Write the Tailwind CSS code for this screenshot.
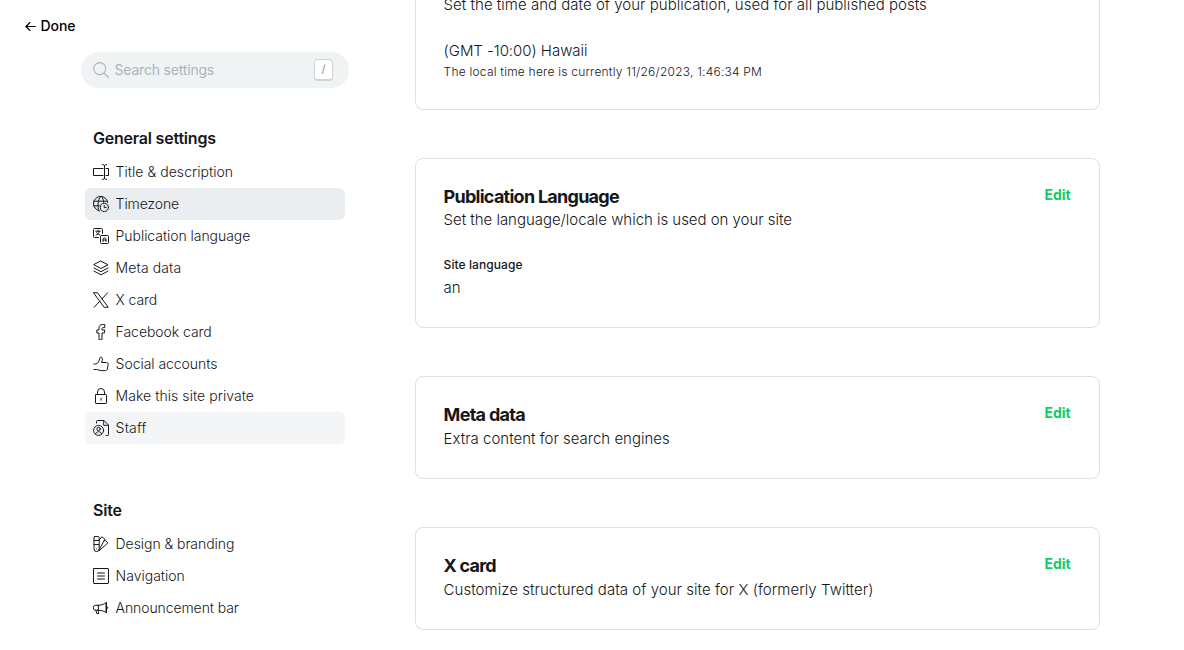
<!DOCTYPE html>
<html lang="en">
<head>
<meta charset="utf-8">
<title>Settings</title>
<script src="https://cdn.jsdelivr.net/npm/@tailwindcss/browser@4"></script>
</head>
<body class="h-[650px] overflow-hidden bg-white font-['Inter',sans-serif] text-[#15171a]">
<div class="flex h-[650px] overflow-hidden">
  <aside class="w-[415px] shrink-0">
    <a class="ml-[25px] mt-[16px] flex h-5 items-center gap-[4.6px] text-sm font-medium tracking-[-0.1px] text-black">
      <svg class="size-[11px]" viewBox="0 0 11 11" fill="none" stroke="currentColor" stroke-width="1.1" stroke-linecap="round" stroke-linejoin="round"><path d="M.7 5.500h9.600M5 1.500l-4.200 4 4.200 4"/></svg>
      <span>Done</span>
    </a>
    <div class="ml-[81px] mt-[16px] flex h-9 w-[268px] items-center rounded-full bg-[#eff3f4] pl-3 pr-4 text-[#abb4be]">
      <svg class="size-4" viewBox="0 0 16 16" fill="none" stroke="currentColor" stroke-width="1.1" stroke-linecap="round"><circle cx="6.700" cy="6.600" r="6"/><path d="M11 11l4.500 4.500"/></svg>
      <span class="ml-[5.5px] flex-1 text-sm tracking-[-0.19px]">Search settings</span>
      <kbd class="flex h-[22px] w-[19px] items-center justify-center rounded border border-b-2 border-[#ced4d9] bg-white font-['Inter'] text-[11px] text-[#7c8b9a]">/</kbd>
    </div>
    <nav class="ml-[85px] mt-10 w-[260px] text-sm font-light">
      <h2 class="mb-[6px] h-[22px] pl-2 text-base font-semibold leading-5 tracking-[-0.21px]">General settings</h2>
      <ul>
        <li class="flex h-8 items-center gap-[6.6px] rounded-md px-2"><svg class="size-4" viewBox="0 0 16 16" fill="none" stroke="currentColor" stroke-linecap="round" stroke-linejoin="round"><path d="M10 4.500H.5v7H10M13 4.500h2.500v7H13M11.500 1.500v13M9.300.6c1.200 0 2.200.5 2.200 1.500 0-1 1-1.500 2.200-1.500M9.300 15.400c1.200 0 2.200-.5 2.200-1.500 0 1 1 1.500 2.200 1.500"/></svg><span class="tracking-[0.04px]">Title &amp; description</span></li>
        <li class="flex h-8 items-center gap-[6.6px] rounded-md bg-[#ebeef0] px-2"><svg class="size-4" viewBox="0 0 16 16" fill="none" stroke="currentColor" stroke-linecap="round" stroke-linejoin="round"><path d="M6.200 14.700A7.200 7.200 0 1 1 14.800 6.500M.8 5.200h13.100M.5 9.800h5.800M6 15C4.400 11 4.400 4.500 7.500.5M8.500.5c1.300 1.700 2.100 3.600 2.200 5.700"/><circle cx="11.400" cy="11.400" r="4.100"/><path d="M11.200 9.400v2.200h2"/></svg><span class="tracking-[-0.1px]">Timezone</span></li>
        <li class="flex h-8 items-center gap-[6.6px] rounded-md px-2"><svg class="size-4" viewBox="0 0 16 16" fill="none" stroke="currentColor" stroke-linecap="round" stroke-linejoin="round"><path d="M5.500 9.500h-4a1 1 0 0 1-1-1v-7a1 1 0 0 1 1-1h7a1 1 0 0 1 1 1v4M2.700 3.200h4.600M5 2.200v1M6.400 3.400C6 5.200 4.500 6.500 3 7M3.700 4.600C4.400 5.700 5.500 6.600 7 7M8.500 7.500h6a1 1 0 0 1 1 1v6a1 1 0 0 1-1 1h-6a1 1 0 0 1-1-1v-6a1 1 0 0 1 1-1M10 13.500v-2.200c0-1.900 3-1.900 3 0v2.200M10 12h3"/></svg><span class="tracking-[-0.05px]">Publication language</span></li>
        <li class="flex h-8 items-center gap-[6.6px] rounded-md px-2"><svg class="size-4" viewBox="0 0 16 16" fill="none" stroke="currentColor" stroke-linecap="round" stroke-linejoin="round"><path d="M8 1.200l7 3.600-7 3.700-7-3.700zM1 8l7 3.700L15 8M1 11.100l7 3.700 7-3.700"/></svg><span class="tracking-[0.1px]">Meta data</span></li>
        <li class="flex h-8 items-center gap-[6.6px] rounded-md px-2"><svg class="size-4" viewBox="0 0 16 16" fill="none" stroke="currentColor" stroke-linecap="round" stroke-linejoin="round"><path d="M.8.7h3.700l10.700 14.600h-3.700zM14.600.7L8.900 7M7 9L1.200 15.300"/></svg><span class="tracking-[-0.1px]">X card</span></li>
        <li class="flex h-8 items-center gap-[6.6px] rounded-md px-2"><svg class="size-4" viewBox="0 0 16 16" fill="none" stroke="currentColor" stroke-linecap="round" stroke-linejoin="round"><path d="M6 15.400V9H3.800V6H6V4.200C6 1.800 7.300.6 9.200.6h2.600v3h-1.600c-.9 0-1.200.4-1.200 1.100V6h2.800l-.5 3H9v6.400z"/></svg><span class="tracking-[-0.05px]">Facebook card</span></li>
        <li class="flex h-8 items-center gap-[6.6px] rounded-md px-2"><svg class="size-4" viewBox="0 0 16 16" fill="none" stroke="currentColor" stroke-linecap="round" stroke-linejoin="round"><path d="M1 8h1.800C5 7.500 6.400 5 6.600 2.600c.1-2.300 2.800-1.900 2.800.4 0 1.400-.4 2.500-.9 3.500h5c1.200 0 1.800.8 1.700 1.800l-.8 4.700c-.2 1.100-.9 1.600-1.900 1.600H8.200c-2 0-2.700-1.100-4.700-1.100H1"/></svg><span class="tracking-[-0.05px]">Social accounts</span></li>
        <li class="flex h-8 items-center gap-[6.6px] rounded-md px-2"><svg class="size-4" viewBox="0 0 16 16" fill="none" stroke="currentColor" stroke-linecap="round" stroke-linejoin="round"><rect x="2.500" y="6.500" width="11" height="9" rx=".6"/><path d="M4.500 6.500V4a3.500 3.500 0 0 1 7 0v2.500M8 10.200v2"/></svg><span class="tracking-[0.05px]">Make this site private</span></li>
        <li class="flex h-8 items-center gap-[6.6px] rounded-md bg-[#f3f5f7] px-2"><svg class="size-4" viewBox="0 0 16 16" fill="none" stroke="currentColor" stroke-linecap="round" stroke-linejoin="round"><path d="M3.500 3V1.500a1 1 0 0 1 1-1H11L15.500 5v9.500a1 1 0 0 1-1 1H13M10.700.7v4.600h4.600"/><circle cx="5.600" cy="10.400" r="5"/><circle cx="5.600" cy="9" r="1.700"/><path d="M2.700 13.800c.5-2.900 5.300-2.900 5.800 0"/></svg><span class="tracking-[0.2px]">Staff</span></li>
      </ul>
      <h2 class="mb-[6px] mt-14 h-[22px] pl-2 text-base font-semibold leading-5 tracking-[-0.21px]">Site</h2>
      <ul>
        <li class="flex h-8 items-center gap-[6.6px] rounded-md px-2"><svg class="size-4" viewBox="0 0 16 16" fill="none" stroke="currentColor" stroke-linecap="round" stroke-linejoin="round"><path d="M1.500.6h4a.7.700 0 0 1 .7.700V13a2.500 2.500 0 0 1-5.200 0V1.300a.7.700 0 0 1 .5-.7zM1 4.500h5M1 8.500h5M6.200 4L8.800.8 12 3.200 5.800 14.300M11 4.600h1.700l2.100 2.300-8.500 7.800M3.600 12.800v.2"/></svg><span class="tracking-[-0.06px]">Design &amp; branding</span></li>
        <li class="flex h-8 items-center gap-[6.6px] rounded-md px-2"><svg class="size-4" viewBox="0 0 16 16" fill="none" stroke="currentColor" stroke-linecap="round" stroke-linejoin="round"><rect x=".5" y=".5" width="15" height="15" rx=".5"/><path d="M4.500 5h7M4.500 8h7M4.500 11h7"/></svg><span>Navigation</span></li>
        <li class="flex h-8 items-center gap-[6.6px] rounded-md px-2"><svg class="size-4" viewBox="0 0 16 16" fill="none" stroke="currentColor" stroke-linecap="round" stroke-linejoin="round"><path d="M5 5.300H2.700a2.300 2.300 0 0 0 0 4.900H5zM5 5.300c3 0 5.800-1 8-2.500v9.600c-2.200-1.400-5-2.200-8-2.200M13.500 2.500v10.300M13.500 7c2.200-.2 2.200 1.700 0 1.500M2.800 10.300l1 3.200h2l-.9-3.200"/></svg><span class="tracking-[-0.09px]">Announcement bar</span></li>
      </ul>
    </nav>
  </aside>
  <main class="flex w-[685px] shrink-0 flex-col gap-12 text-[15px] font-light">
    <section class="h-[110px] shrink-0 rounded-b-lg border border-t-0 border-[#dde1e5] pl-[27.6px] pr-[28.3px]">
      <p class="-mt-[6px] h-[22px] leading-[22px] tracking-[0.02px]">Set the time and date of your publication, used for all published posts</p>
      <p class="mt-6 h-[22px] leading-[22px] tracking-[-0.04px]">(GMT -10:00) Hawaii</p>
      <p class="mt-px h-[18px] text-xs leading-[18px] tracking-[0.22px] text-[#15171a]">The local time here is currently 11/26/2023, 1:46:34 PM</p>
    </section>
    <section class="h-[170px] shrink-0 rounded-lg border border-[#dde1e5] pl-[27.6px] pr-[28.3px] pt-[26px]">
      <div class="flex items-start justify-between"><h3 class="h-6 text-lg font-bold leading-6 tracking-[-0.74px]">Publication Language</h3><button class="text-sm font-bold leading-5 text-[#14cb62]">Edit</button></div>
      <p class="h-[22px] leading-[22px] tracking-[-0.03px]">Set the language/locale which is used on your site</p>
      <h4 class="mt-[25px] h-[18px] text-xs font-medium leading-[18px] tracking-[0.08px]">Site language</h4>
      <p class="mt-[3px] leading-[22px]">an</p>
    </section>
    <section class="h-[103px] shrink-0 rounded-lg border border-[#dde1e5] pl-[27.6px] pr-[28.3px] pt-[26px]">
      <div class="flex items-start justify-between"><h3 class="h-6 text-lg font-bold leading-6 tracking-[-0.72px]">Meta data</h3><button class="text-sm font-bold leading-5 text-[#14cb62]">Edit</button></div>
      <p class="mt-px h-[22px] leading-[22px]">Extra content for search engines</p>
    </section>
    <section class="h-[103px] shrink-0 rounded-lg border border-[#dde1e5] pl-[27.6px] pr-[28.3px] pt-[26px]">
      <div class="flex items-start justify-between"><h3 class="h-6 text-lg font-bold leading-6 tracking-[-0.8px]">X card</h3><button class="text-sm font-bold leading-5 text-[#14cb62]">Edit</button></div>
      <p class="mt-px h-[22px] leading-[22px] tracking-[0.04px]">Customize structured data of your site for X (formerly Twitter)</p>
    </section>
  </main>
</div>
</body>
</html>
